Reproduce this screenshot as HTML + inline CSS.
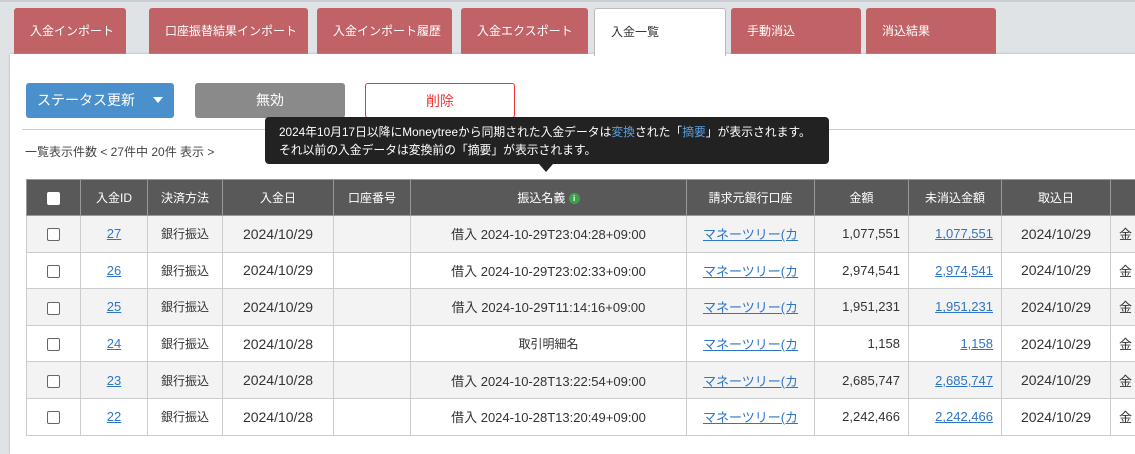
<!DOCTYPE html>
<html><head><meta charset="utf-8"><style>
*{box-sizing:border-box;margin:0;padding:0}
body{width:1135px;height:431px;overflow:hidden;background:#e0e3e6;font-family:"Liberation Sans","Noto Sans CJK JP",sans-serif;color:#333;position:relative}
.topline{position:absolute;left:0;top:0;width:1135px;height:2px;background:#c9ccd0}
.tab{position:absolute;top:8px;height:46px;background:#c06266;color:#fff;font-size:12px;line-height:46px;padding-left:16px;border-radius:3px 3px 0 0;white-space:nowrap}
.tab.act{background:#fff;color:#333;border:1px solid #bbb;border-bottom:none;top:8px;height:48px;z-index:3}
.panel{position:absolute;left:10px;top:54px;width:1135px;height:400px;background:#fff;box-shadow:0 0 2px #aaa}
.btn{position:absolute;top:83px;height:35px;border-radius:3px;font-size:14px;line-height:35px;text-align:center}
.hr{position:absolute;left:22px;top:129px;width:1113px;height:1px;background:#ccc}
.cnt{position:absolute;left:25px;top:143px;font-size:12px;color:#444}
.tip{position:absolute;left:265px;top:117px;width:564px;height:47px;background:#222;color:#fff;border-radius:4px;font-size:11.8px;padding:6px 0 0 14px;line-height:18px;z-index:5;white-space:nowrap}
.tip a{color:#5a9ee0}
.arrow{position:absolute;left:539px;top:164px;width:0;height:0;border-left:7px solid transparent;border-right:7px solid transparent;border-top:8px solid #222;z-index:5}
table{position:absolute;left:26px;top:179px;border-collapse:collapse;table-layout:fixed;width:1130px;font-size:13px}
th{background:#595959;color:#fff;font-weight:normal;height:36px;border:1px solid #999;font-size:12px}
td{height:36.6px;border:1px solid #ccc;text-align:center;white-space:nowrap;overflow:hidden}
td.d{font-size:14px}
tr:nth-child(even) td{background:#f3f3f3}
td a{color:#2f75c5;text-decoration:underline}
td.r{text-align:right;padding-right:8px}
.cb{display:inline-block;width:13px;height:13px;border:1px solid #666;border-radius:2px;background:#fff;vertical-align:middle}
.hcb{display:inline-block;width:13px;height:13px;background:#fff;border-radius:2px;vertical-align:middle}
.info{display:inline-block;width:11px;height:11px;border-radius:50%;background:#3aa34a;color:#fff;font-size:8px;line-height:11px;text-align:center;vertical-align:middle;font-weight:bold}
</style></head><body>
<div class="topline"></div>
<div class="tab" style="left:14px;width:112px">入金インポート</div>
<div class="tab" style="left:149px;width:159px">口座振替結果インポート</div>
<div class="tab" style="left:317px;width:135px">入金インポート履歴</div>
<div class="tab" style="left:461px;width:127px">入金エクスポート</div>
<div class="tab act" style="left:594px;width:132px">入金一覧</div>
<div class="tab" style="left:731px;width:130px">手動消込</div>
<div class="tab" style="left:866px;width:130px">消込結果</div>
<div class="panel"></div>
<div class="btn" style="left:26px;width:148px;background:#4a90cc;color:#fff;text-align:left;padding-left:11px">ステータス更新<span style="position:absolute;right:11px;top:14px;border-left:5px solid transparent;border-right:5px solid transparent;border-top:6px solid #fff"></span></div>
<div class="btn" style="left:195px;width:150px;background:#8a8a8a;color:#fff">無効</div>
<div class="btn" style="left:365px;width:150px;background:#fff;color:#e33;border:1px solid #e33">削除</div>
<div class="hr"></div>
<div class="cnt">一覧表示件数 &lt; 27件中 20件 表示 &gt;</div>
<div class="tip">2024年10月17日以降にMoneytreeから同期された入金データは<a>変換</a>された「<a>摘要</a>」が表示されます。<br>それ以前の入金データは変換前の「摘要」が表示されます。</div>
<div class="arrow"></div>
<table>
<colgroup><col style="width:54px"><col style="width:67px"><col style="width:75px"><col style="width:111px"><col style="width:77px"><col style="width:276px"><col style="width:128px"><col style="width:94px"><col style="width:93px"><col style="width:109px"><col style="width:46px"></colgroup>
<tr><th><span class="hcb"></span></th><th>入金ID</th><th>決済方法</th><th>入金日</th><th>口座番号</th><th>振込名義 <span class="info">i</span></th><th>請求元銀行口座</th><th>金額</th><th>未消込金額</th><th>取込日</th><th></th></tr>
<tr><td><span class="cb"></span></td><td><a>27</a></td><td style="font-size:12px">銀行振込</td><td class="d">2024/10/29</td><td></td><td>借入 2024-10-29T23:04:28+09:00</td><td><a>マネーツリー(カ</a></td><td class="r">1,077,551</td><td class="r"><a>1,077,551</a></td><td class="d">2024/10/29</td><td style="text-align:left;padding-left:8px">金</td></tr>
<tr><td><span class="cb"></span></td><td><a>26</a></td><td style="font-size:12px">銀行振込</td><td class="d">2024/10/29</td><td></td><td>借入 2024-10-29T23:02:33+09:00</td><td><a>マネーツリー(カ</a></td><td class="r">2,974,541</td><td class="r"><a>2,974,541</a></td><td class="d">2024/10/29</td><td style="text-align:left;padding-left:8px">金</td></tr>
<tr><td><span class="cb"></span></td><td><a>25</a></td><td style="font-size:12px">銀行振込</td><td class="d">2024/10/29</td><td></td><td>借入 2024-10-29T11:14:16+09:00</td><td><a>マネーツリー(カ</a></td><td class="r">1,951,231</td><td class="r"><a>1,951,231</a></td><td class="d">2024/10/29</td><td style="text-align:left;padding-left:8px">金</td></tr>
<tr><td><span class="cb"></span></td><td><a>24</a></td><td style="font-size:12px">銀行振込</td><td class="d">2024/10/28</td><td></td><td style="font-size:12px">取引明細名</td><td><a>マネーツリー(カ</a></td><td class="r">1,158</td><td class="r"><a>1,158</a></td><td class="d">2024/10/29</td><td style="text-align:left;padding-left:8px">金</td></tr>
<tr><td><span class="cb"></span></td><td><a>23</a></td><td style="font-size:12px">銀行振込</td><td class="d">2024/10/28</td><td></td><td>借入 2024-10-28T13:22:54+09:00</td><td><a>マネーツリー(カ</a></td><td class="r">2,685,747</td><td class="r"><a>2,685,747</a></td><td class="d">2024/10/29</td><td style="text-align:left;padding-left:8px">金</td></tr>
<tr><td><span class="cb"></span></td><td><a>22</a></td><td style="font-size:12px">銀行振込</td><td class="d">2024/10/28</td><td></td><td>借入 2024-10-28T13:20:49+09:00</td><td><a>マネーツリー(カ</a></td><td class="r">2,242,466</td><td class="r"><a>2,242,466</a></td><td class="d">2024/10/29</td><td style="text-align:left;padding-left:8px">金</td></tr>
</table>
</body></html>
